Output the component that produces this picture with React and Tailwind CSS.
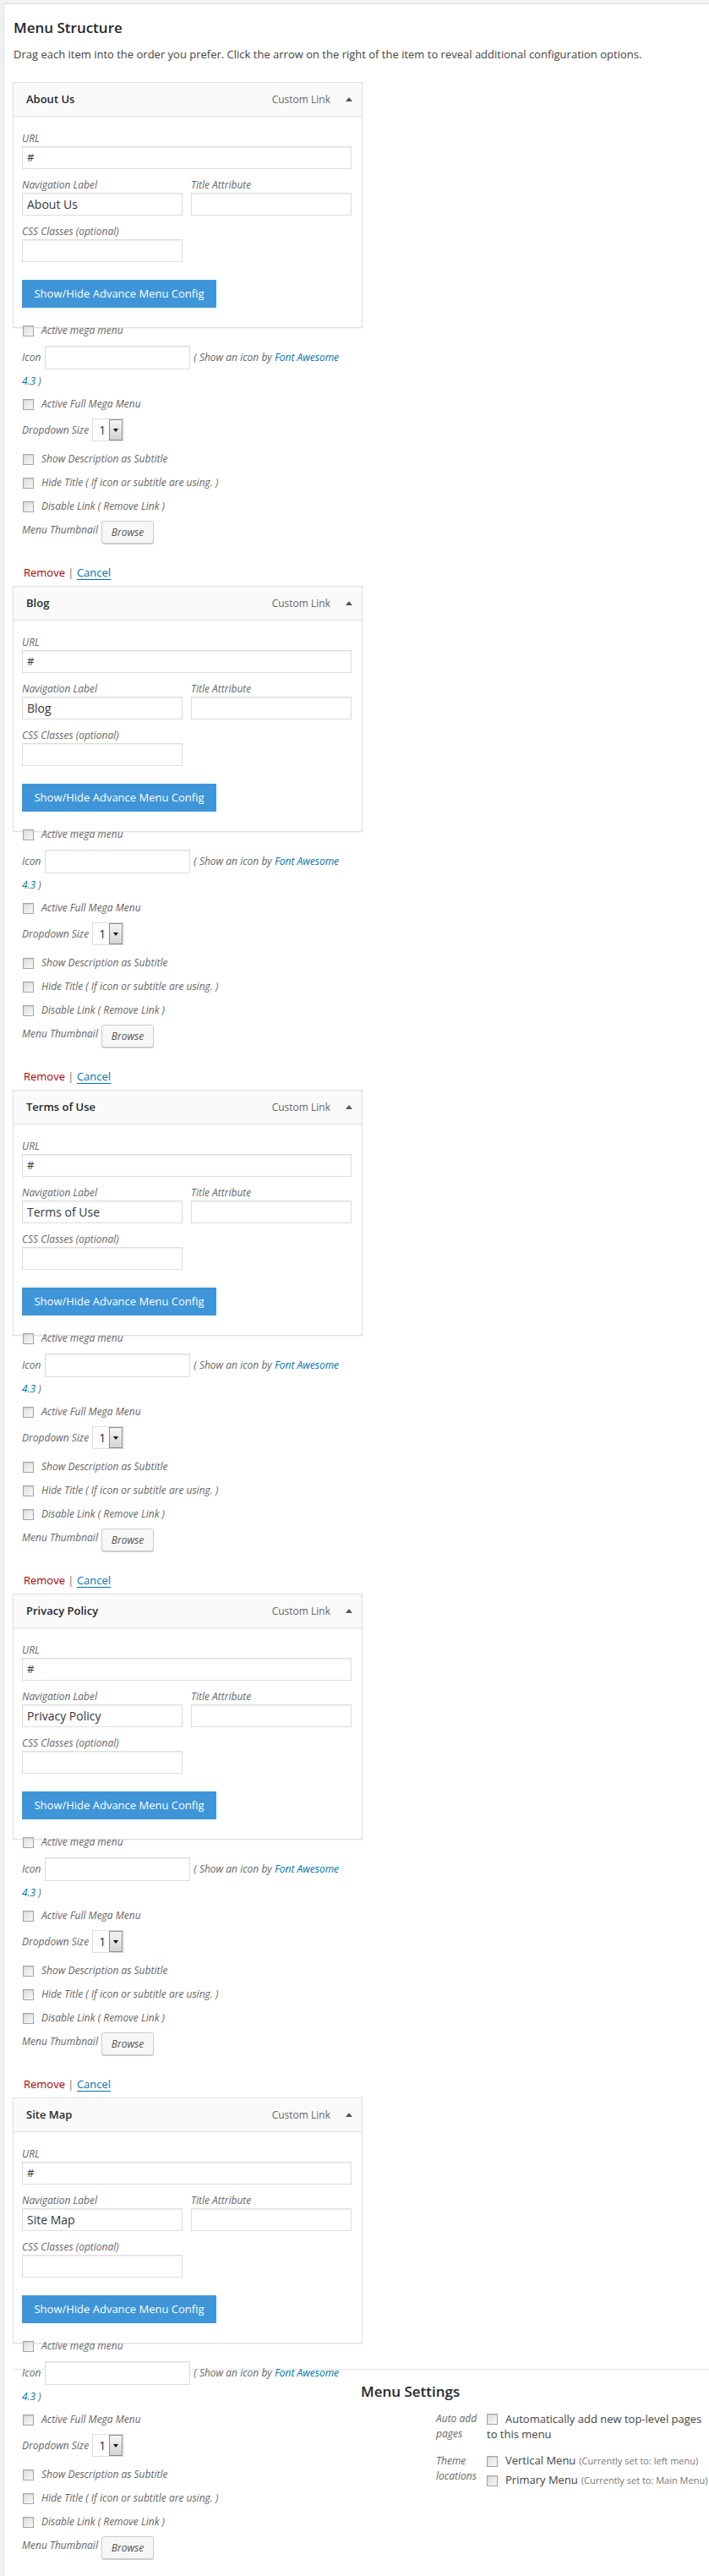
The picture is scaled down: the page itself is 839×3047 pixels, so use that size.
import React from "react";

function Check({ className = "" }) {
  return (
    <span
      className={
        "inline-block w-[13px] h-[13px] shrink-0 border border-[#a3a3a3] bg-linear-to-br from-[#dcdcdc] to-[#f9f9f9] shadow-[inset_0_1px_1px_rgba(0,0,0,0.08)] " +
        className
      }
    />
  );
}

function CheckRow({ label, className = "" }) {
  return (
    <div className={"h-[20px] flex items-center gap-[9px] " + className}>
      <Check className="ml-px" />
      <span>{label}</span>
    </div>
  );
}

function Box({ className = "", children }) {
  return (
    <div
      className={
        "border border-[#dddddd] bg-white shadow-[inset_0_1px_2px_rgba(0,0,0,0.07)] flex items-center pl-[5px] not-italic text-[#32373c] " +
        className
      }
    >
      {children}
    </div>
  );
}

function Panel({ title }) {
  return (
    <div className="w-[414px] border border-[#dfdfdf] bg-white shadow-[0_1px_1px_rgba(0,0,0,0.04)]">
      <div className="h-[40px] flex items-center justify-between bg-[#fafafa] border-b border-[#dfdfdf] pl-[15px] pr-[11px]">
        <span className="text-[13px] font-semibold text-[#23282d]">{title}</span>
        <span className="flex items-center">
          <span className="text-[12px] text-[#666]">Custom Link</span>
          <span className="ml-[18px] w-0 h-0 border-l-[4px] border-r-[4px] border-b-[5px] border-l-transparent border-r-transparent border-b-[#555]" />
        </span>
      </div>
      <div className="pt-[17px] pl-[10px] pr-[12px] pb-[23px]">
        <div className="h-[18px] leading-[18px] text-[12px] italic text-[#666]">URL</div>
        <Box className="h-[27px] w-[390px] text-[13px]">#</Box>
        <div className="mt-[10px] flex gap-[10px]">
          <div className="w-[190px]">
            <div className="h-[18px] leading-[18px] text-[12px] italic text-[#666]">Navigation Label</div>
            <Box className="h-[27px] w-[190px] text-[14px]">{title}</Box>
          </div>
          <div className="w-[190px]">
            <div className="h-[18px] leading-[18px] text-[12px] italic text-[#666]">Title Attribute</div>
            <Box className="h-[27px] w-[190px] text-[14px]" />
          </div>
        </div>
        <div className="mt-[10px] h-[18px] leading-[18px] text-[12px] italic text-[#666]">CSS Classes (optional)</div>
        <Box className="h-[27px] w-[190px] text-[14px]" />
        <div className="mt-[21px] w-[230px] h-[33px] bg-[#3e95d8] text-white text-[13px] flex items-center justify-center">
          Show/Hide Advance Menu Config
        </div>
      </div>
    </div>
  );
}

function Select() {
  return (
    <div className="w-[38px] h-[27px] border border-[#dddddd] bg-white flex items-center not-italic">
      <span className="pl-[7px] text-[14px] text-[#333] flex-1">1</span>
      <span className="mr-px w-[16px] h-[25px] border border-[#8a8a8a] bg-linear-to-b from-[#f4f4f4] to-[#d4d4d4] flex items-center justify-center">
        <span className="w-0 h-0 border-l-[3px] border-r-[3px] border-t-[4px] border-l-transparent border-r-transparent border-t-[#111]" />
      </span>
    </div>
  );
}

function RestRows() {
  return (
    <div className="pl-[11px] text-[12px] italic text-[#666]">
      <div className="h-[28px] flex items-center">
        <span>Icon</span>
        <Box className="ml-[5px] w-[172px] h-[28px]" />
        <span className="ml-[4px]">
          ( Show an icon by <span className="text-[#0073aa]">Font Awesome</span>
        </span>
      </div>
      <div className="h-[28px] flex items-center">
        <span className="text-[#0073aa]">4.3</span>
        <span>&nbsp;)</span>
      </div>
      <CheckRow className="mt-[3px]" label="Active Full Mega Menu" />
      <div className="mt-[7px] h-[27px] flex items-center gap-[4px]">
        <span>Dropdown Size</span>
        <Select />
      </div>
      <CheckRow className="mt-[11px]" label="Show Description as Subtitle" />
      <CheckRow className="mt-[8px]" label="Hide Title ( If icon or subtitle are using. )" />
      <CheckRow className="mt-[8px]" label="Disable Link ( Remove Link )" />
      <div className="mt-[7px] flex items-start gap-[4px]">
        <span className="leading-[22px]">Menu Thumbnail</span>
        <div className="w-[62px] h-[27px] border border-[#cccccc] rounded-[3px] bg-[#f7f7f7] shadow-[0_1px_0_#cccccc] flex items-center justify-center text-[#555]">
          Browse
        </div>
      </div>
    </div>
  );
}

function Item({ title }) {
  return (
    <div>
      <Panel title={title} />
      <div className="-mt-[7px]">
        <div className="pl-[11px] text-[12px] italic text-[#666]">
          <CheckRow label="Active mega menu" />
        </div>
        <div className="mt-[8px]">
          <RestRows />
        </div>
        <div className="mt-[25px] mb-[5px] h-[20px] flex items-center pl-[13px] text-[13px]">
          <span className="text-[#a00]">Remove</span>
          <span className="text-[#777] whitespace-pre"> | </span>
          <span className="text-[#0073aa] underline underline-offset-[3px]">Cancel</span>
        </div>
      </div>
    </div>
  );
}

function LastItem({ title }) {
  return (
    <div>
      <Panel title={title} />
      <div className="-mt-[7px] relative z-10">
        <div className="pl-[11px] text-[12px] italic text-[#666]">
          <CheckRow label="Active mega menu" />
        </div>
      </div>
      <div className="mt-[17px] border-t border-[#e3e3e3] flex items-start">
        <div className="w-[412px] shrink-0 -mt-[10px] relative z-10">
          <RestRows />
        </div>
        <div className="pt-[15px]">
          <h3 className="h-[22px] leading-[22px] text-[17px] font-semibold text-[#23282d]">Menu Settings</h3>
          <div className="mt-[12px] ml-[89px] grid grid-cols-[60px_263px]">
            <div className="text-[12px] italic text-[#666] leading-[18px]">Auto add pages</div>
            <div className="text-[13px] leading-[18px] text-[#444]">
              <Check className="align-[-2px] mr-[9px]" />
              Automatically add new top-level pages to this menu
            </div>
            <div className="mt-[14px] text-[12px] italic text-[#666] leading-[18px]">Theme locations</div>
            <div className="mt-[14px]">
              <div className="h-[18px] flex items-center">
                <Check className="mr-[9px]" />
                <span className="text-[13px] text-[#444]">Vertical Menu</span>
                <span className="ml-[4px] text-[11px] text-[#777]">(Currently set to: left menu)</span>
              </div>
              <div className="mt-[5px] h-[18px] flex items-center">
                <Check className="mr-[9px]" />
                <span className="text-[13px] text-[#444]">Primary Menu</span>
                <span className="ml-[4px] text-[11px] text-[#777]">(Currently set to: Main Menu)</span>
              </div>
            </div>
          </div>
        </div>
      </div>
    </div>
  );
}

export default function App() {
  return (
    <div className="w-[839px] h-[3047px] overflow-hidden bg-[#f1f1f1] pt-[4px] pl-[4px] font-['Open_Sans',sans-serif] text-[#444]">
      <div className="h-full bg-white border-t border-l border-[#dddddd] pl-[10px]">
        <h2 className="ml-px mt-[17px] h-[22px] leading-[22px] text-[17px] font-semibold text-[#23282d]">Menu Structure</h2>
        <p className="ml-px mt-[11px] h-[18px] leading-[18px] text-[13px] text-[#444]">
          Drag each item into the order you prefer. Click the arrow on the right of the item to reveal additional configuration options.
        </p>
        <div className="mt-[24px]">
          <Item title="About Us" />
          <Item title="Blog" />
          <Item title="Terms of Use" />
          <Item title="Privacy Policy" />
          <LastItem title="Site Map" />
        </div>
      </div>
    </div>
  );
}
